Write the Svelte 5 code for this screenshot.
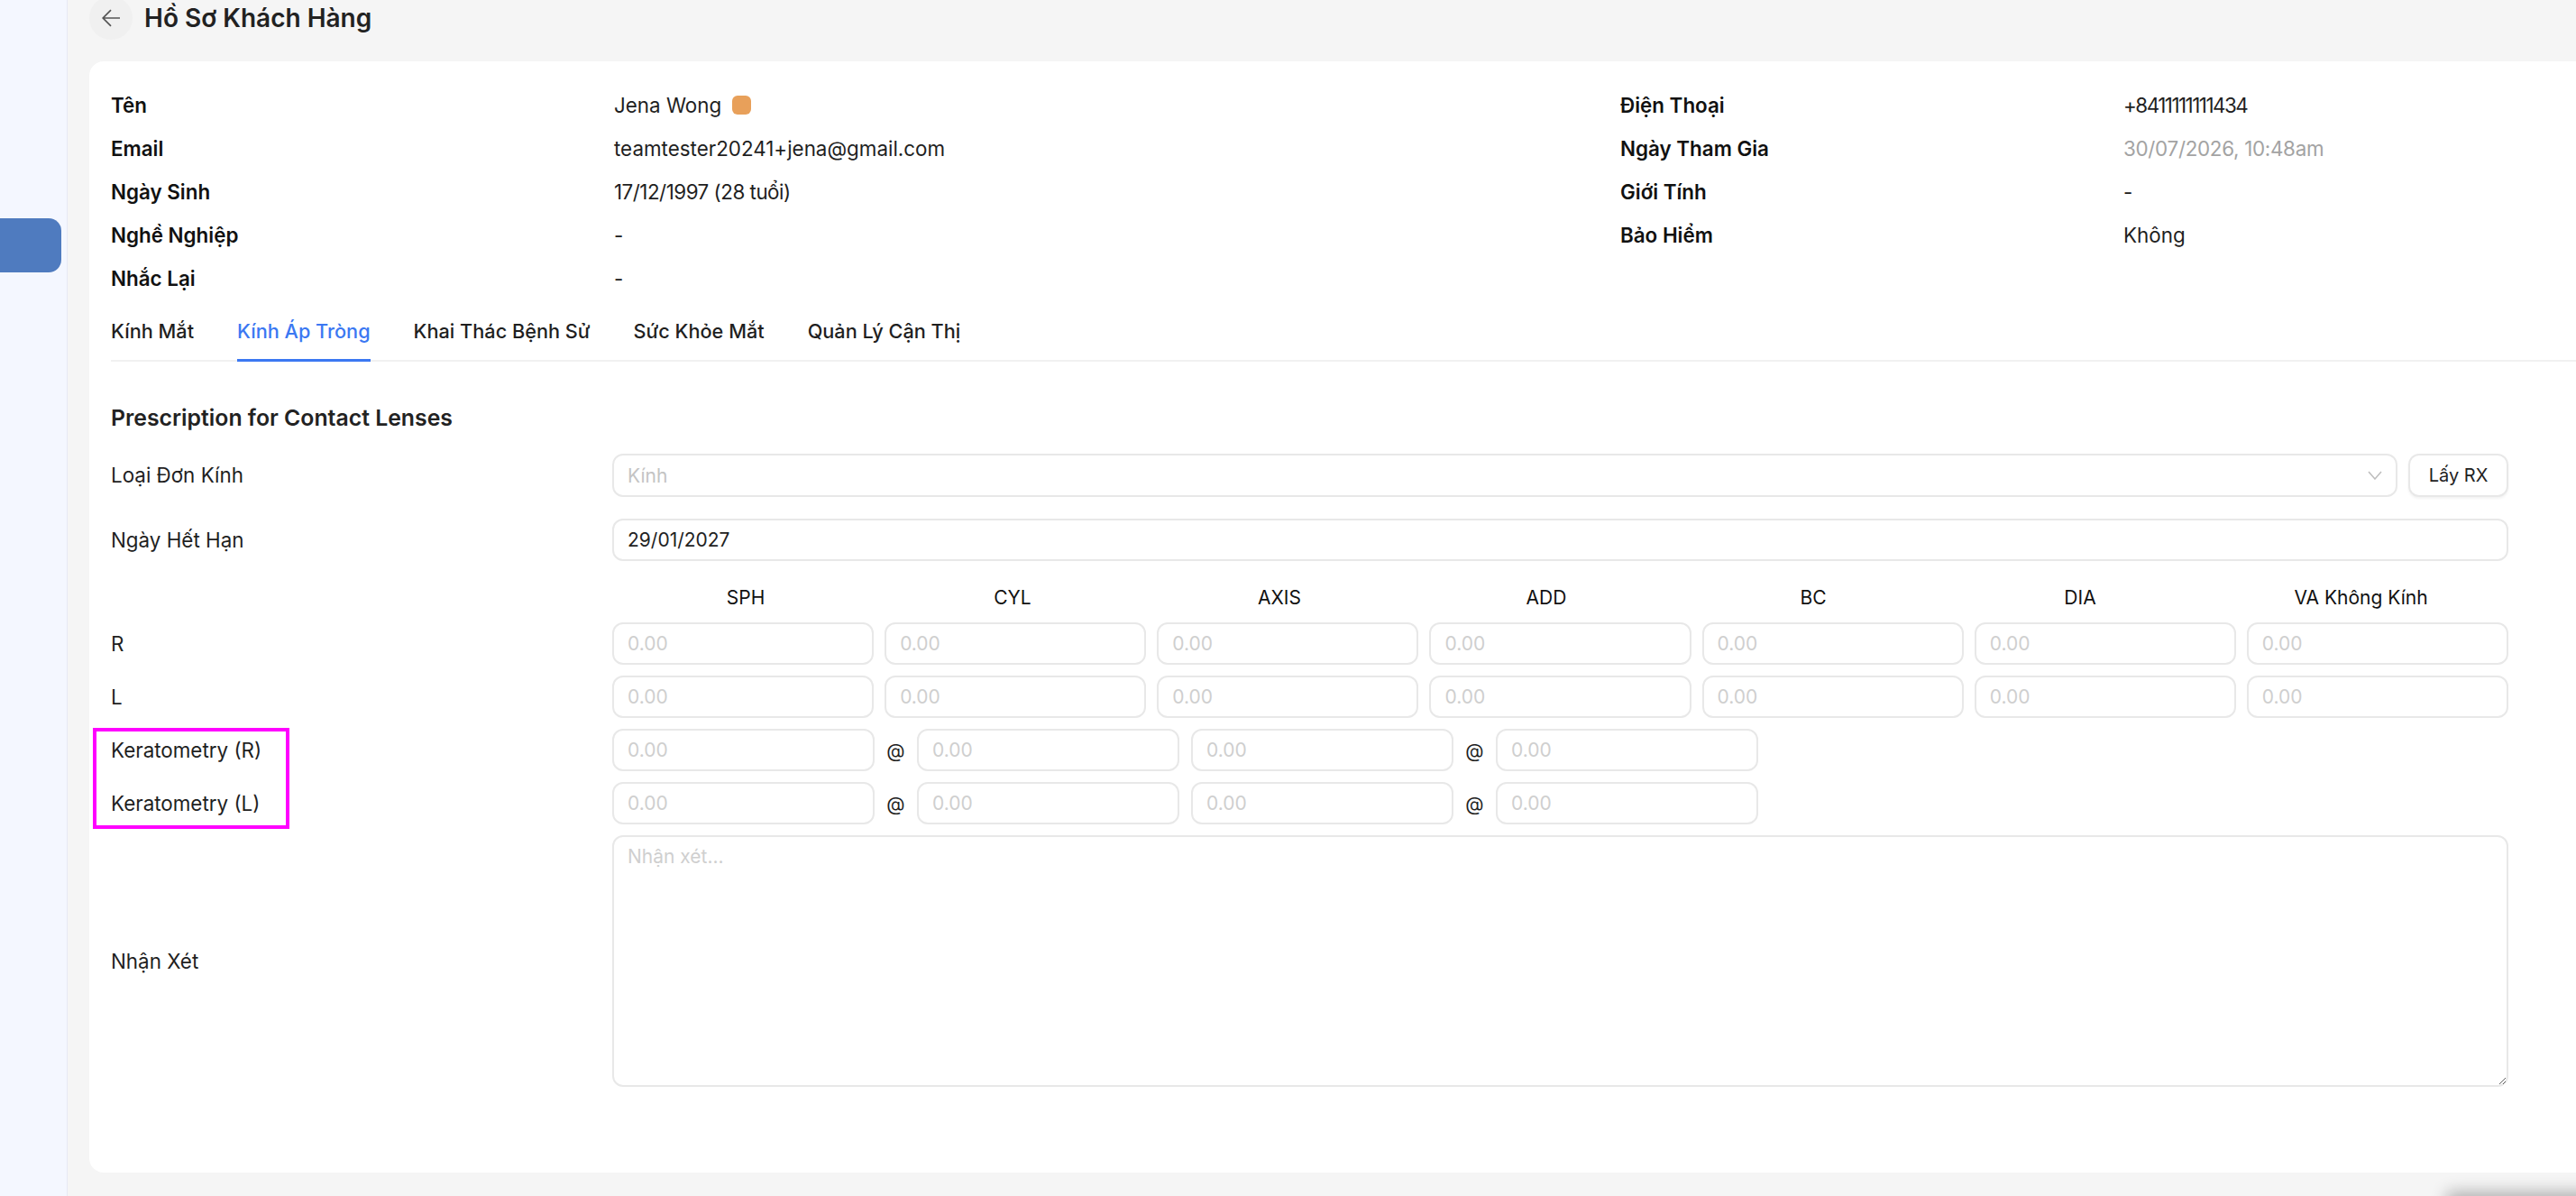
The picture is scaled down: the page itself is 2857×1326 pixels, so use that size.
<script lang="ts">
  const infoRows = [
    { label: "Tên", value: "Jena Wong", badge: true, right: "Điện Thoại", rightValue: "+8411111111434", digits: true },
    { label: "Email", value: "teamtester20241+jena@gmail.com", right: "Ngày Tham Gia", rightValue: "30/07/2026, 10:48am", muted: true },
    { label: "Ngày Sinh", value: "17/12/1997 (28 tuổi)", tight: true, right: "Giới Tính", rightValue: "-" },
    { label: "Nghề Nghiệp", value: "-", right: "Bảo Hiểm", rightValue: "Không" },
    { label: "Nhắc Lại", value: "-" }
  ];
  const tabs = ["Kính Mắt", "Kính Áp Tròng", "Khai Thác Bệnh Sử", "Sức Khỏe Mắt", "Quản Lý Cận Thị"];
  const columns = ["SPH", "CYL", "AXIS", "ADD", "BC", "DIA", "VA Không Kính"];
  let activeTab = $state(1);
</script>

<div class="layout">
  <aside class="sidebar">
    <div class="side-active"></div>
  </aside>

  <main class="main">
    <header class="page-head">
      <button class="back" aria-label="Quay lại">
        <svg width="20" height="20" viewBox="0 0 20 20" fill="none" stroke="#555" stroke-width="1.7">
          <path d="M20 10H1.2M10 1.2 1.2 10l8.8 8.8" />
        </svg>
      </button>
      <h1>Hồ Sơ Khách Hàng</h1>
    </header>

    <section class="card">
      <div class="info">
        {#each infoRows as row}
          <div class="info-label">{row.label}</div>
          <div class="info-value" class:tight={row.tight}>
            {row.value}
            {#if row.badge}<span class="badge"></span>{/if}
          </div>
          <div class="info-label">{row.right ?? ""}</div>
          <div class="info-value" class:muted={row.muted} class:digits={row.digits}>{row.rightValue ?? ""}</div>
        {/each}
      </div>

      <nav class="tabs">
        {#each tabs as tab, i}
          <button class="tab" class:active={i === activeTab} onclick={() => (activeTab = i)}>{tab}</button>
        {/each}
      </nav>

      <h2>Prescription for Contact Lenses</h2>

      <div class="form">
        <label class="first" for="rx-type">Loại Đơn Kính</label>
        <div class="select-row">
          <div class="select" id="rx-type">
            <span>Kính</span>
            <svg width="16" height="10" viewBox="0 0 16 10" fill="none" stroke="#bdbdbd" stroke-width="1.5">
              <path d="M1 1l7 8 7-8" />
            </svg>
          </div>
          <button class="rx-btn">Lấy RX</button>
        </div>

        <label for="expiry">Ngày Hết Hạn</label>
        <input id="expiry" value="29/01/2027" />

        <span></span>
        <div class="heads">
          {#each columns as col}<div>{col}</div>{/each}
        </div>

        {#each ["R", "L"] as eye}
          <span class="row-label">{eye}</span>
          <div class="grid7">
            {#each columns as col}
              <input placeholder="0.00" aria-label="{eye} {col}" />
            {/each}
          </div>
        {/each}

        {#each ["R", "L"] as eye}
          <span class="row-label">Keratometry ({eye})</span>
          <div class="kera">
            <div class="pair">
              <input placeholder="0.00" /><span class="at">@</span><input placeholder="0.00" />
            </div>
            <div class="pair">
              <input placeholder="0.00" /><span class="at">@</span><input placeholder="0.00" />
            </div>
          </div>
        {/each}

        <label for="note">Nhận Xét</label>
        <textarea id="note" placeholder="Nhận xét..."></textarea>
      </div>

      <div class="highlight"></div>
    </section>
  </main>

  <div class="corner-shadow"></div>
</div>

<style>
  :global(body) {
    margin: 0;
    font-family: Inter, "Noto Sans", sans-serif;
    color: #1f1f1f;
  }

  .layout {
    position: relative;
    display: flex;
    height: 1326px;
    overflow: hidden;
    background: #f5f5f5;
  }

  .sidebar {
    flex: 0 0 75px;
    box-sizing: border-box;
    padding-top: 242px;
    background: #f4f7ff;
    border-right: 1px solid #e7e9f4;
  }
  .side-active {
    width: 68px;
    height: 60px;
    background: #4f7bbf;
    border-radius: 0 14px 14px 0;
  }

  .main {
    flex: 1;
    min-width: 0;
    padding-left: 24px;
  }

  .page-head {
    display: flex;
    align-items: center;
    gap: 13px;
    height: 48px;
    margin-top: -4px;
    margin-bottom: 24px;
  }
  .back {
    display: flex;
    align-items: center;
    justify-content: center;
    width: 48px;
    height: 48px;
    padding: 0;
    border: none;
    border-radius: 50%;
    background: #f0f0f0;
  }
  h1 {
    margin: 0;
    font-size: 28px;
    font-weight: 600;
    color: #222;
  }

  .card {
    position: relative;
    box-sizing: border-box;
    height: 1232px;
    padding: 24px 0 0 24px;
    background: #fff;
    border-radius: 16px 0 0 16px;
  }

  .info {
    display: grid;
    grid-template-columns: 558px 1116px 558px 1fr;
    grid-auto-rows: 48px;
    align-items: center;
    font-size: 22.4px;
  }
  .info-label {
    font-weight: 600;
    color: #111;
  }
  .info-value {
    display: flex;
    align-items: center;
    gap: 12px;
  }
  .muted {
    color: #a3a3a3;
    letter-spacing: -0.3px;
  }
  .tight {
    letter-spacing: -0.5px;
  }
  .digits {
    letter-spacing: -1.5px;
  }
  .badge {
    width: 21px;
    height: 21px;
    border-radius: 6px;
    background: #e8a05a;
  }

  .tabs {
    display: flex;
    gap: 48px;
    height: 69px;
    box-sizing: border-box;
    border-bottom: 2px solid #f1f1f1;
  }
  .tab {
    padding: 3px 0 0;
    height: 69px;
    box-sizing: border-box;
    border: none;
    border-bottom: 3px solid transparent;
    background: none;
    font: 500 21.7px Inter, sans-serif;
    color: #1f1f1f;
  }
  .tab.active {
    color: #3b78f2;
    border-bottom-color: #3b78f2;
  }

  h2 {
    margin: 45px 0 23px;
    font-size: 24.8px;
    line-height: 34px;
    font-weight: 600;
    color: #222;
  }

  .form {
    display: grid;
    grid-template-columns: 556px 2103px;
    row-gap: 12px;
    align-items: center;
    font-size: 22.4px;
  }
  .form label.first {
    margin-bottom: 14px;
  }

  input,
  textarea,
  .select {
    box-sizing: border-box;
    width: 100%;
    min-width: 0;
    height: 47px;
    padding: 0 15px;
    border: 2px solid #e8e8e8;
    border-radius: 12px;
    background: #fff;
    font: 400 21px Inter, sans-serif;
    color: #222;
    outline: none;
  }
  input::placeholder,
  textarea::placeholder {
    color: #cfcfcf;
  }

  .select-row {
    display: flex;
    gap: 12px;
    margin-bottom: 12px;
  }
  .select {
    flex: 1;
    height: 48px;
    display: flex;
    align-items: center;
    justify-content: space-between;
    color: #c4c4c4;
  }
  .rx-btn {
    flex: 0 0 111px;
    height: 48px;
    border: 2px solid #e8e8e8;
    border-radius: 12px;
    background: #fff;
    box-shadow: 0 2px 3px rgba(0, 0, 0, 0.05);
    font: 400 20px Inter, sans-serif;
    color: #222;
  }

  .grid7 {
    display: grid;
    grid-template-columns: repeat(7, 1fr);
    gap: 12px;
  }
  .heads {
    display: grid;
    grid-template-columns: repeat(6, 296px) 1fr;
    height: 30px;
    line-height: 30px;
    margin-top: 14px;
    text-align: center;
    font-size: 21px;
    color: #111;
  }

  .kera {
    display: flex;
    gap: 13px;
  }
  .pair {
    display: grid;
    grid-template-columns: 291px 47px 291px;
  }
  .at {
    box-sizing: border-box;
    height: 47px;
    padding-top: 3px;
    text-align: center;
    font-size: 21px;
    line-height: 44px;
  }

  textarea {
    height: 279px;
    padding: 9px 15px;
    display: block;
  }

  /* annotation drawn over the screenshot */
  .highlight {
    position: absolute;
    left: 4px;
    top: 739px;
    width: 218px;
    height: 112px;
    box-sizing: border-box;
    border: 4px solid #ff00ff;
  }

  .corner-shadow {
    position: absolute;
    left: 2720px;
    top: 1328px;
    width: 300px;
    height: 10px;
    box-shadow: 0 0 18px 6px rgba(0, 0, 0, 0.3);
  }
</style>
